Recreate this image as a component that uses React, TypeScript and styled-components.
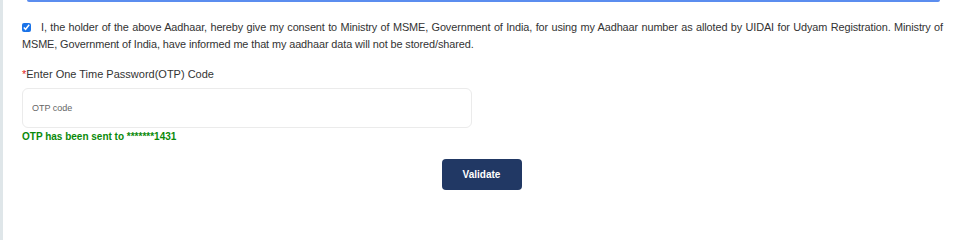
import React from "react";
import styled, { createGlobalStyle } from "styled-components";

const GlobalStyle = createGlobalStyle`
  body {
    margin: 0;
    background: #ffffff;
    font-family: "Liberation Sans", Arial, sans-serif;
  }
`;

const Page = styled.div`
  display: flex;
  min-height: 240px;
  border-left: 3px solid #dfe6e9;
`;

const Content = styled.div`
  flex: 1;
  display: flex;
  flex-direction: column;
  padding: 0 17px 0 19px;
`;

const CardEdge = styled.div`
  height: 2px;
  background: #5b8def;
  margin: 0 3px 0 5px;
  border-radius: 0 0 2px 2px;
`;

const Consent = styled.label`
  display: block;
  margin-top: 17px;
  font-size: 10.9px;
  letter-spacing: -0.1px;
  line-height: 17px;
  color: #333333;
  text-align: justify;
`;

const Check = styled.input`
  width: 9px;
  height: 9px;
  margin: 0 10px 0 0;
  vertical-align: -1px;
  accent-color: #1a73e8;
`;

const FieldLabel = styled.div`
  margin-top: 15px;
  font-size: 11px;
  color: #333333;
`;

const Required = styled.span`
  color: #e02020;
`;

const OtpInput = styled.input`
  box-sizing: border-box;
  width: 450px;
  height: 40px;
  margin-top: 8px;
  padding: 0 9px;
  border: 1px solid #ebebeb;
  border-radius: 6px;
  font-family: "Liberation Sans", Arial, sans-serif;
  font-size: 9px;
  color: #333;
  outline: none;

  &::placeholder {
    color: #666666;
  }
`;

const SentNote = styled.div`
  margin-top: 3px;
  font-size: 10px;
  font-weight: 700;
  color: #0a8a0a;
`;

const ButtonRow = styled.div`
  display: flex;
  justify-content: center;
  margin-top: 17px;
  padding-right: 2px;
`;

const ValidateButton = styled.button`
  width: 80px;
  height: 31px;
  border: none;
  border-radius: 4px;
  background: #213864;
  color: #ffffff;
  font-family: "Liberation Sans", Arial, sans-serif;
  font-size: 10px;
  font-weight: 700;
  cursor: pointer;
`;

export default function App() {
  return (
    <>
      <GlobalStyle />
      <Page>
        <Content>
          <CardEdge />
          <Consent>
            <Check type="checkbox" defaultChecked />
            I, the holder of the above Aadhaar, hereby give my consent to Ministry of MSME, Government of India, for using my Aadhaar number as alloted by UIDAI for Udyam Registration. Ministry of MSME, Government of India, have informed me that my aadhaar data will not be stored/shared.
          </Consent>
          <FieldLabel>
            <Required>*</Required>Enter One Time Password(OTP) Code
          </FieldLabel>
          <OtpInput type="text" placeholder="OTP code" />
          <SentNote>OTP has been sent to *******1431</SentNote>
          <ButtonRow>
            <ValidateButton>Validate</ValidateButton>
          </ButtonRow>
        </Content>
      </Page>
    </>
  );
}
